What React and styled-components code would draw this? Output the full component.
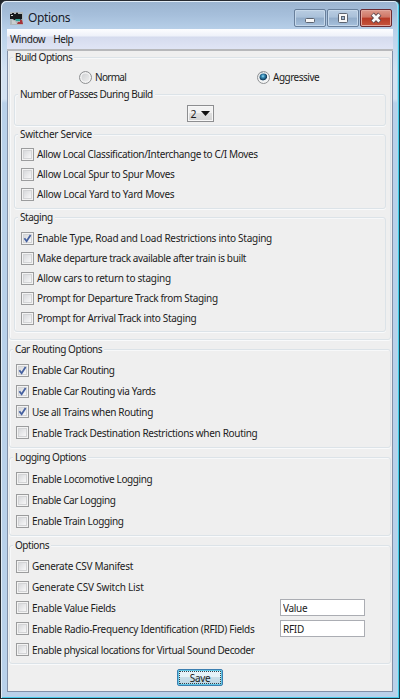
import React from "react";
import styled, { createGlobalStyle } from "styled-components";

const Global = createGlobalStyle`
  * { box-sizing: border-box; }
  html, body { margin: 0; padding: 0; overflow: hidden; background: #20252b; }
  body { font-family: "Noto Sans", sans-serif; font-size: 10px; color: #1c1c1c; }
`;

const Frame = styled.div`
  width: 400px;
  height: 699px;
  display: flex;
  flex-direction: column;
  padding: 0 6px 6px;
  border: 1px solid #262a31;
  border-right-color: #1d4654;
  border-radius: 6px 6px 0 0;
  background: linear-gradient(#9bb4d0 0, #a6bfdb 14px, #b9d1ea 30px, #d3e2f2 70px, #d3e2f2 98px, #b9d1ea 102px);
  box-shadow: inset 1px 1px 0 #e2edf7, inset -1px -1px 0 #45cbea, inset -2px 0 0 #a7def0;
`;

const TitleBar = styled.header`
  height: 28px;
  flex: none;
  display: flex;
  align-items: center;
  padding: 6px 1px 0 3px;
`;

const Title = styled.h1`
  flex: 1;
  margin: 0 0 0 5px;
  font-size: 12px;
  font-weight: 400;
  line-height: 16px;
  letter-spacing: -0.35px;
  color: #18202b;
  text-shadow: 0 0 5px #d5e4f3;
`;

const WindowButtons = styled.div`
  display: flex;
  gap: 1px;
  height: 18px;
  margin-top: -1px;
`;

const WindowButton = styled.button`
  width: 32px;
  height: 18px;
  display: flex;
  align-items: center;
  justify-content: center;
  padding: 0;
  border: 1px solid ${(p) => (p.$close ? "#6b2b32" : "#687f9b")};
  border-radius: 2px;
  box-shadow: inset 0 0 0 1px ${(p) => (p.$close ? "#e3a79c" : "#c6d8ea")};
  background: ${(p) =>
    p.$close
      ? "linear-gradient(#dc9a8c 0 , #cf7565 45%, #b73a26 50%, #c6563e 100%)"
      : "linear-gradient(#b9cde2 0, #a9c0d9 45%, #92acc9 50%, #a6c0dc 100%)"};
`;

const MenuBar = styled.nav`
  height: 22px;
  flex: none;
  display: flex;
  align-items: center;
  gap: 8px;
  padding: 0 3px 1px;
  letter-spacing: -0.45px;
  background: linear-gradient(#fdfdff 0, #eef1f9 7px, #d5dbee 8px, #dfe4f4 19px);
  border-bottom: 2px solid #b7b8bb;
`;

const Client = styled.main`
  flex: 1;
  display: flex;
  flex-direction: column;
  align-items: stretch;
  padding: 6px 1px 0 1px;
  background: #efefef;
  border: 1px solid #8290a8;
  border-top: 0;
`;

const Group = styled.section`
  flex: none;
  height: ${(p) => p.$height}px;
  margin: ${(p) => p.$margin || "0"};
  padding: 0 6px;
  border: 1px solid #dce3e8;
  border-radius: 3px;
  box-shadow: inset 1px 1px 0 #f7f8f9, 0 1px 0 #f9fafb;
`;

const Legend = styled.h2`
  width: fit-content;
  height: 14px;
  margin: -7px 0 ${(p) => p.$gap}px -3px;
  padding: 0 2px;
  font-size: inherit;
  font-weight: 400;
  line-height: 13px;
  letter-spacing: ${(p) => p.$spacing}px;
  white-space: nowrap;
  background: #efefef;
`;

const Row = styled.label`
  height: ${(p) => p.$pitch}px;
  display: flex;
  align-items: center;
  gap: 3px;
`;

const Caption = styled.span`
  flex: 1;
  line-height: 14px;
  letter-spacing: ${(p) => p.$spacing}px;
  white-space: nowrap;
`;

const Box = styled.span`
  width: 13px;
  height: 13px;
  flex: none;
  display: grid;
  place-items: center;
  border: 1px solid #9b9c9d;
  background: linear-gradient(135deg, #cfd1d4, #f4f4f5 75%);
  box-shadow: inset 0 0 0 1px #f3f3f3, inset 0 0 0 2px #d3d4d6;
`;

const RadioRow = styled.div`
  height: 20px;
  display: grid;
  grid-template-columns: 178px 1fr;
  padding-left: 63px;
`;

const Dot = styled.span`
  width: 13px;
  height: 13px;
  flex: none;
  border-radius: 50%;
  border: 1px solid #8f9193;
  box-shadow: inset 0 0 0 1.5px #f4f4f4;
  background: ${(p) =>
    p.$on
      ? "radial-gradient(circle at 45% 38%, #9fe0f5 0, #3a8fb9 1.5px, #123c5c 3.8px, #eef2f4 4.6px)"
      : "linear-gradient(135deg, #cbcdcf, #f3f3f3)"};
`;

const Combo = styled.button`
  width: 27px;
  height: 17px;
  display: flex;
  align-items: center;
  justify-content: space-between;
  margin: 0 auto;
  padding: 0 3px;
  border: 1px solid #8d8e90;
  box-shadow: inset 0 0 0 1px #f7f7f7;
  background: linear-gradient(#f2f2f2 45%, #dfdfdf 50%, #d4d4d4);
  font: inherit;
  font-size: 10.5px;
  color: inherit;
`;

const Field = styled.input`
  width: 85px;
  height: 17px;
  flex: none;
  margin-right: 19px;
  padding: 0 2px;
  border: 1px solid #abadb3;
  background: #fff;
  font: inherit;
  letter-spacing: -0.3px;
  color: inherit;
  outline: 0;
`;

const SaveButton = styled.button`
  width: 46px;
  height: 17px;
  margin: 5px auto 0 168px;
  padding: 0;
  display: grid;
  place-items: center;
  border: 1px solid #3c7fb1;
  border-radius: 2px;
  box-shadow: inset 0 0 0 1px #62c8e6;
  background: linear-gradient(#e6f2f8 45%, #cadfe9 50%, #bcd6e3);
  outline: 1px dotted #33434d;
  outline-offset: -3px;
  font: inherit;
  letter-spacing: -0.3px;
  color: inherit;
`;

const TrainIcon = () => (
  <svg width="13" height="13" viewBox="0 0 13 13">
    <rect width="13" height="13" fill="#aeb7bb" />
    <path d="M0 2h2V1h2v1h2V0.800h2V2h4v5l-2 1H4L3 7H0z" fill="#15191c" />
    <path d="M1 3h2v1H1z" fill="#d8dcdc" />
    <path d="M5 7h5v2H6z" fill="#35a79c" />
    <path d="M2 8l3 1 2 3H2z" fill="#c9ced0" />
    <path d="M10 8h2l1 4H7l1-2h2z" fill="#a5343a" />
  </svg>
);

const MinimizeIcon = () => (
  <svg width="12" height="12" viewBox="0 0 12 12">
    <rect x="1.500" y="6.500" width="9" height="4" rx="1" fill="#f8f8f8" stroke="#5b6370" />
  </svg>
);

const MaximizeIcon = () => (
  <svg width="12" height="12" viewBox="0 0 12 12">
    <rect x="1.500" y="1.500" width="9" height="9" rx="1" fill="#f8f8f8" stroke="#5b6370" />
    <rect x="4.500" y="4.500" width="3" height="3" fill="#a2b8d0" stroke="#5b6370" />
  </svg>
);

const CloseIcon = () => (
  <svg width="12" height="12" viewBox="0 0 12 12">
    <path d="M2.200 2.200l7.600 7.600M9.800 2.200l-7.600 7.600" stroke="#5e454b" strokeWidth="4.600" />
    <path d="M2.600 2.600l6.800 6.800M9.400 2.600l-6.800 6.800" stroke="#fafafa" strokeWidth="2.800" />
  </svg>
);

const Tick = () => (
  <svg width="9" height="9" viewBox="0 0 9 9">
    <path d="M1.400 4.300l2.200 2.900L7.600 1" fill="none" stroke="#45609f" strokeWidth="1.800" />
  </svg>
);

const Check = ({ text, on, pitch, spacing, children }) => (
  <Row $pitch={pitch}>
    <Box>{on && <Tick />}</Box>
    <Caption $spacing={spacing}>{text}</Caption>
    {children}
  </Row>
);

export default function App() {
  return (
    <>
      <Global />
      <Frame>
        <TitleBar>
          <TrainIcon />
          <Title>Options</Title>
          <WindowButtons>
            <WindowButton aria-label="Minimize"><MinimizeIcon /></WindowButton>
            <WindowButton aria-label="Maximize"><MaximizeIcon /></WindowButton>
            <WindowButton aria-label="Close" $close><CloseIcon /></WindowButton>
          </WindowButtons>
        </TitleBar>
        <MenuBar>
          <span>Window</span>
          <span>Help</span>
        </MenuBar>
        <Client>
          <Group $height={283}>
            <Legend $gap={3} $spacing={-0.5}>Build Options</Legend>
            <RadioRow>
              <Row $pitch={18}><Dot /><Caption $spacing={-0.7}>Normal</Caption></Row>
              <Row $pitch={18}><Dot $on /><Caption $spacing={-0.5}>Aggressive</Caption></Row>
            </RadioRow>
            <Group $height={32} $margin="6px -2px 0">
              <Legend $gap={3} $spacing={-0.5}>Number of Passes During Build</Legend>
              <Combo>
                2
                <svg width="9" height="5" viewBox="0 0 9 5"><path d="M0 0h9L4.500 5z" fill="#111" /></svg>
              </Combo>
            </Group>
            <Group $height={75} $margin="8px -2px 0">
              <Legend $gap={2} $spacing={-0.27}>Switcher Service</Legend>
              <Check pitch={20} spacing={-0.35} text="Allow Local Classification/Interchange to C/I Moves" />
              <Check pitch={20} spacing={-0.3} text="Allow Local Spur to Spur Moves" />
              <Check pitch={20} spacing={-0.23} text="Allow Local Yard to Yard Moves" />
            </Group>
            <Group $height={115} $margin="8px -2px 0">
              <Legend $gap={3} $spacing={-0.45}>Staging</Legend>
              <Check pitch={20} spacing={-0.27} on text="Enable Type, Road and Load Restrictions into Staging" />
              <Check pitch={20} spacing={-0.38} text="Make departure track available after train is built" />
              <Check pitch={20} spacing={-0.25} text="Allow cars to return to staging" />
              <Check pitch={20} spacing={-0.32} text="Prompt for Departure Track from Staging" />
              <Check pitch={20} spacing={-0.32} text="Prompt for Arrival Track into Staging" />
            </Group>
          </Group>
          <Group $height={99} $margin="9px 0 0">
            <Legend $gap={3} $spacing={-0.43}>Car Routing Options</Legend>
            <Check pitch={20.8} spacing={-0.41} on text="Enable Car Routing" />
            <Check pitch={20.8} spacing={-0.38} on text="Enable Car Routing via Yards" />
            <Check pitch={20.8} spacing={-0.33} on text="Use all Trains when Routing" />
            <Check pitch={20.8} spacing={-0.32} text="Enable Track Destination Restrictions when Routing" />
          </Group>
          <Group $height={79} $margin="9px 0 0">
            <Legend $gap={3} $spacing={-0.5}>Logging Options</Legend>
            <Check pitch={21.4} spacing={-0.38} text="Enable Locomotive Logging" />
            <Check pitch={21.4} spacing={-0.45} text="Enable Car Logging" />
            <Check pitch={21.4} spacing={-0.36} text="Enable Train Logging" />
          </Group>
          <Group $height={119} $margin="9px 0 0">
            <Legend $gap={3} $spacing={-0.45}>Options</Legend>
            <Check pitch={20.8} spacing={-0.31} text="Generate CSV Manifest" />
            <Check pitch={20.8} spacing={-0.18} text="Generate CSV Switch List" />
            <Check pitch={20.8} spacing={-0.32} text="Enable Value Fields"><Field defaultValue="Value" /></Check>
            <Check pitch={20.8} spacing={-0.31} text="Enable Radio-Frequency Identification (RFID) Fields"><Field defaultValue="RFID" /></Check>
            <Check pitch={20.8} spacing={-0.37} text="Enable physical locations for Virtual Sound Decoder" />
          </Group>
          <SaveButton>Save</SaveButton>
        </Client>
      </Frame>
    </>
  );
}
